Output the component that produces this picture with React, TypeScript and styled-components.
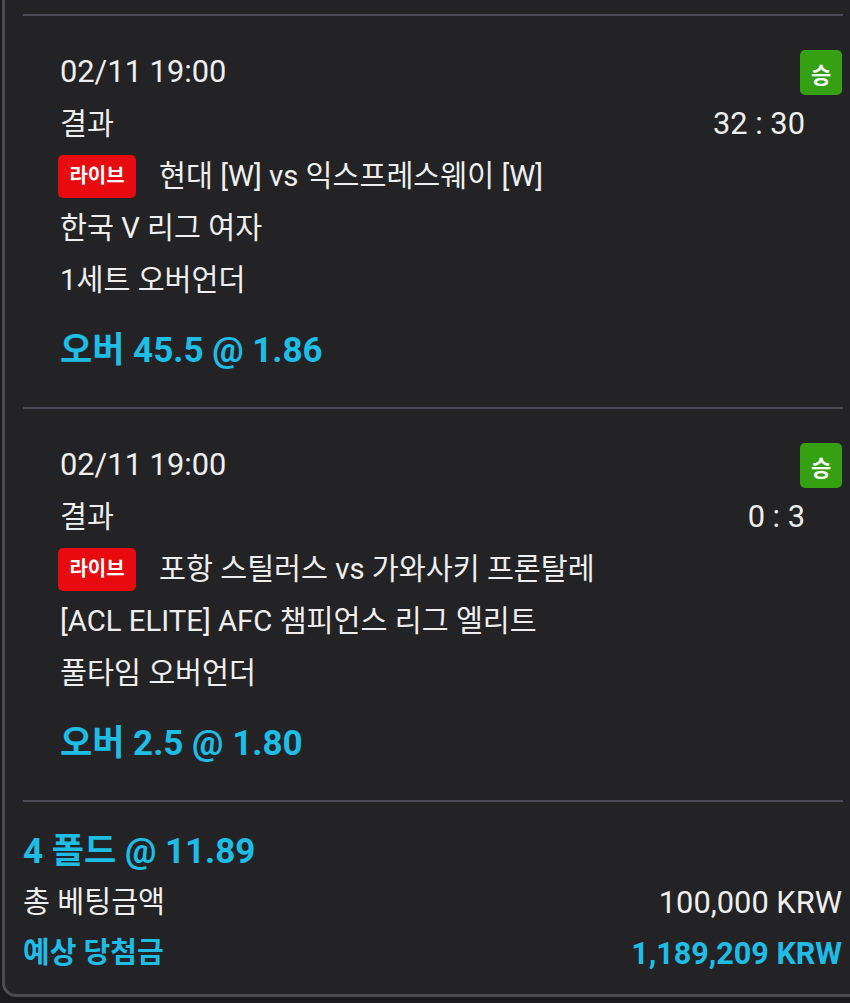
import React from "react";
import styled, { createGlobalStyle } from "styled-components";

const Global = createGlobalStyle`
  html, body { margin: 0; padding: 0; background: #1b1b1e; }
  body { font-family: Roboto, "Noto Sans CJK KR", "Noto Sans", sans-serif; color: #efefef; }
  * { box-sizing: border-box; }
`;

const Card = styled.div`
  margin-left: 2px;
  width: 848px;
  height: 997px;
  padding: 14px 7px 0 18px;
  background: #232326;
  border-left: 3px solid #4c4c52;
  border-bottom: 3px solid #4c4c52;
  border-bottom-left-radius: 14px;
  display: flex;
  flex-direction: column;
`;

const Section = styled.section`
  position: relative;
  border-top: 2px solid #4b4b56;
  padding: 30px 38px 30px 37px;
  display: flex;
  flex-direction: column;
`;

const Summary = styled.section`
  border-top: 2px solid #4b4b56;
  padding: 24px 1px 0 0;
  display: flex;
  flex-direction: column;
`;

const Row = styled.div<{ $between?: boolean }>`
  height: 52px;
  display: flex;
  align-items: center;
  justify-content: ${(p) => (p.$between ? "space-between" : "flex-start")};
  font-size: 29.3px;
  line-height: 52px;
  white-space: nowrap;
`;

const SumRow = styled(Row)`
  height: 51px;
  line-height: 51px;
`;

const Num = styled.span`
  font-size: 30.8px;
`;

const Odds = styled.div<{ $mt?: number }>`
  margin-top: ${(p) => p.$mt ?? 0}px;
  height: 52px;
  line-height: 52px;
  font-size: 35px;
  font-weight: 700;
  color: #1dbde6;
  white-space: nowrap;
`;

const Blue = styled.span<{ $bold?: boolean; $size?: number }>`
  color: #1dbde6;
  font-weight: ${(p) => (p.$bold ? 700 : 400)};
  font-size: ${(p) => p.$size ?? 30}px;
`;

const LiveBadge = styled.span`
  display: inline-flex;
  align-items: center;
  justify-content: center;
  width: 78px;
  height: 43px;
  margin-left: -2px;
  margin-right: 23px;
  border-radius: 5px;
  background: #e80a0e;
  color: #fff;
  font-size: 20px;
  font-weight: 700;
  line-height: 1;
`;

const WinBadge = styled.span`
  position: absolute;
  top: 34px;
  right: 1px;
  width: 42px;
  height: 45px;
  border-radius: 5px;
  background: #34a012;
  color: #fff;
  font-size: 22px;
  font-weight: 700;
  display: flex;
  align-items: center;
  justify-content: center;
`;

type Bet = {
  date: string;
  score: string;
  match: string;
  league: string;
  market: string;
  pick: string;
};

const bets: Bet[] = [
  {
    date: "02/11 19:00",
    score: "32 : 30",
    match: "현대 [W] vs 익스프레스웨이 [W]",
    league: "한국 V 리그 여자",
    market: "1세트 오버언더",
    pick: "오버 45.5 @ 1.86",
  },
  {
    date: "02/11 19:00",
    score: "0 : 3",
    match: "포항 스틸러스 vs 가와사키 프론탈레",
    league: "[ACL ELITE] AFC 챔피언스 리그 엘리트",
    market: "풀타임 오버언더",
    pick: "오버 2.5 @ 1.80",
  },
];

export default function App() {
  return (
    <>
      <Global />
      <Card>
        {bets.map((b, i) => (
          <Section key={i}>
            <WinBadge>승</WinBadge>
            <Row>
              <Num>{b.date}</Num>
            </Row>
            <Row $between>
              <span>결과</span>
              <Num>{b.score}</Num>
            </Row>
            <Row>
              <LiveBadge>라이브</LiveBadge>
              <span>{b.match}</span>
            </Row>
            <Row>{b.league}</Row>
            <Row>{b.market}</Row>
            <Odds $mt={19}>{b.pick}</Odds>
          </Section>
        ))}
        <Summary>
          <SumRow>
            <Blue $bold $size={35}>4 폴드 @ 11.89</Blue>
          </SumRow>
          <SumRow $between>
            <span>총 베팅금액</span>
            <Num>100,000 KRW</Num>
          </SumRow>
          <SumRow $between>
            <Blue $bold $size={29}>예상 당첨금</Blue>
            <Blue $bold $size={30.5}>1,189,209 KRW</Blue>
          </SumRow>
        </Summary>
      </Card>
    </>
  );
}
